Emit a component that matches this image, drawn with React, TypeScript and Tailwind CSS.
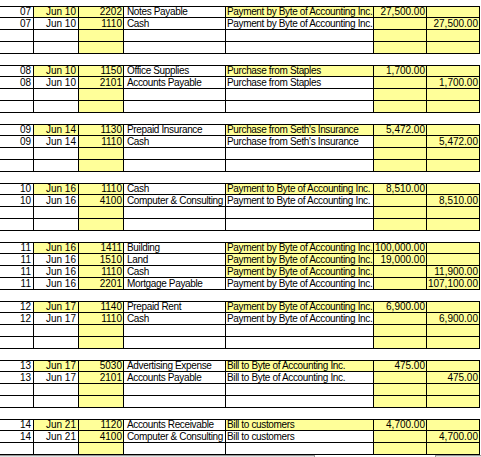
import React from "react";

type Row = {
  n?: string;
  d?: string;
  acct?: string;
  name?: string;
  expl?: string;
  dr?: string;
  cr?: string;
  yDate?: boolean;
  yExpl?: boolean;
};

const P = "Payment by Byte of Accounting Inc.";
const T = "Payment to Byte of Accounting Inc.";

const groups: Row[][] = [
  [
    { n: "07", d: "Jun 10", acct: "2202", name: "Notes Payable", expl: P, dr: "27,500.00", yDate: true, yExpl: true },
    { n: "07", d: "Jun 10", acct: "1110", name: "Cash", expl: P, cr: "27,500.00" },
    {},
    {},
  ],
  [
    { n: "08", d: "Jun 10", acct: "1150", name: "Office Supplies", expl: "Purchase from Staples", dr: "1,700.00", yDate: true, yExpl: true },
    { n: "08", d: "Jun 10", acct: "2101", name: "Accounts Payable", expl: "Purchase from Staples", cr: "1,700.00" },
    {},
    {},
  ],
  [
    { n: "09", d: "Jun 14", acct: "1130", name: "Prepaid Insurance", expl: "Purchase from Seth's Insurance", dr: "5,472.00", yDate: true, yExpl: true },
    { n: "09", d: "Jun 14", acct: "1110", name: "Cash", expl: "Purchase from Seth's Insurance", cr: "5,472.00" },
    {},
    {},
  ],
  [
    { n: "10", d: "Jun 16", acct: "1110", name: "Cash", expl: T, dr: "8,510.00", yDate: true, yExpl: true },
    { n: "10", d: "Jun 16", acct: "4100", name: "Computer & Consulting", expl: T, cr: "8,510.00" },
    {},
    {},
  ],
  [
    { n: "11", d: "Jun 16", acct: "1411", name: "Building", expl: P, dr: "100,000.00", yDate: true, yExpl: true },
    { n: "11", d: "Jun 16", acct: "1510", name: "Land", expl: P, dr: "19,000.00", yExpl: true },
    { n: "11", d: "Jun 16", acct: "1110", name: "Cash", expl: P, cr: "11,900.00", yExpl: true },
    { n: "11", d: "Jun 16", acct: "2201", name: "Mortgage Payable", expl: P, cr: "107,100.00" },
  ],
  [
    { n: "12", d: "Jun 17", acct: "1140", name: "Prepaid Rent", expl: P, dr: "6,900.00", yDate: true, yExpl: true },
    { n: "12", d: "Jun 17", acct: "1110", name: "Cash", expl: P, cr: "6,900.00" },
    {},
    {},
  ],
  [
    { n: "13", d: "Jun 17", acct: "5030", name: "Advertising Expense", expl: "Bill to Byte of Accounting Inc.", dr: "475.00", yDate: true, yExpl: true },
    { n: "13", d: "Jun 17", acct: "2101", name: "Accounts Payable", expl: "Bill to Byte of Accounting Inc.", cr: "475.00" },
    {},
    {},
  ],
  [
    { n: "14", d: "Jun 21", acct: "1120", name: "Accounts Receivable", expl: "Bill to customers", dr: "4,700.00", yDate: true, yExpl: true },
    { n: "14", d: "Jun 21", acct: "4100", name: "Computer & Consulting", expl: "Bill to customers", cr: "4,700.00" },
    {},
  ],
];

const NUM = "font-['Liberation_Sans_Narrow','Liberation_Sans',Arial,sans-serif] text-[10px] leading-[10px]";
const TXT = "font-['Liberation_Sans',Arial,sans-serif] text-[10px] leading-[10px] tracking-[-0.35px]";

function Cell({
  w,
  text,
  yellow,
  right,
  num,
  pad,
}: {
  w: string;
  text?: string;
  yellow?: boolean;
  right?: boolean;
  num?: boolean;
  pad: string;
}) {
  return (
    <div
      className={`${w} h-full shrink-0 overflow-hidden whitespace-nowrap border-r border-black flex items-end text-black ${
        yellow ? "bg-[#ffff99]" : "bg-white"
      } ${right ? "justify-end" : "justify-start"} ${pad} ${num ? NUM : TXT}`}
    >
      {text ?? ""}
    </div>
  );
}

function RowView({ r, first }: { r: Row; first: boolean }) {
  return (
    <div className={`flex w-[480px] border-b border-black ${first ? "h-[11px]" : "h-[12px]"}`}>
      <Cell w="w-[34px]" text={r.n} right num pad="pr-[2px]" />
      <Cell w="w-[45px]" text={r.d} right num yellow={r.yDate} pad="pr-[2px]" />
      <Cell w="w-[45px]" text={r.acct} right num yellow pad="pr-[1px]" />
      <Cell w="w-[102px]" text={r.name} pad="pl-[3px]" />
      <Cell w="w-[148px]" text={r.expl} yellow={r.yExpl} pad="pl-[1px]" />
      <Cell w="w-[53px]" text={r.dr} right num yellow pad="pr-[1px]" />
      <Cell w="w-[53px]" text={r.cr} right num yellow pad="pr-[1px]" />
    </div>
  );
}

export default function App() {
  return (
    <div className="w-[481px] h-[457px] overflow-hidden bg-white flex flex-col pt-[6px]">
      <div className="flex flex-col gap-[11px]">
        {groups.map((g, gi) => (
          <div key={gi} className="flex flex-col border-t border-black w-[480px]">
            {g.map((r, ri) => (
              <RowView key={ri} r={r} first={ri === 0} />
            ))}
          </div>
        ))}
      </div>
      <div className="flex h-[3px] shrink-0">
        <div className="w-[315px] bg-[#e4e4e4] border-t border-r border-[#9a9a9a]" />
        <div className="w-[120px] bg-white" />
        <div className="flex-1 bg-[#e4e4e4] border-t border-l border-[#9a9a9a]" />
      </div>
    </div>
  );
}
